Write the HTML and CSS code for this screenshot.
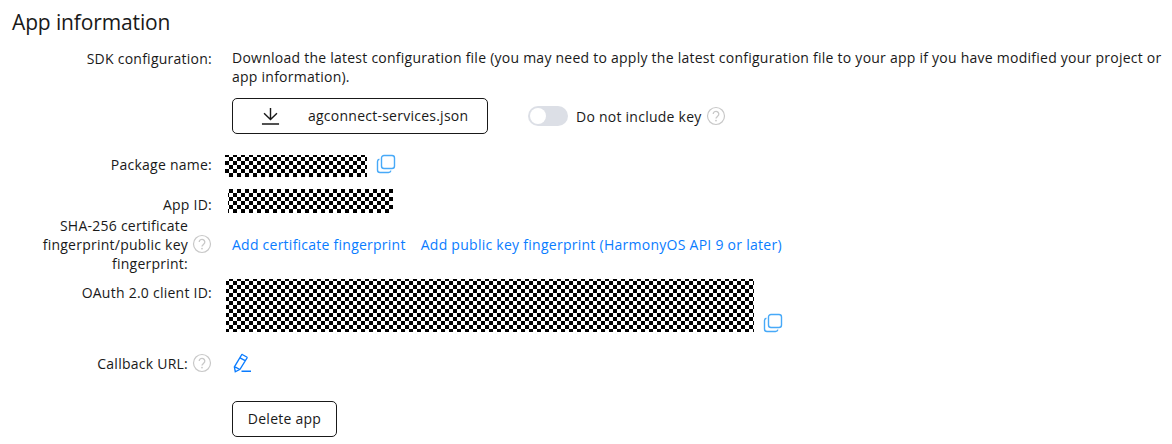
FILE: index.html
```
<!DOCTYPE html>
<html lang="en">
<head>
<meta charset="utf-8">
<title>App information</title>
<link rel="stylesheet" href="styles.css">
</head>
<body>
<svg class="sprite" width="0" height="0" aria-hidden="true">
  <symbol id="help" viewBox="0 0 20 20">
    <circle cx="10" cy="10" r="8.5" fill="none" stroke="currentColor" stroke-width="1.2"/>
    <path d="M7.2 8.1a2.8 2.7 0 1 1 4.6 2c-1.1.9-1.8 1.3-1.8 2.5" fill="none" stroke="currentColor" stroke-width="1.3"/>
    <circle cx="10" cy="14.6" r=".9" fill="currentColor"/>
  </symbol>
  <symbol id="copy" viewBox="0 0 20 20">
    <rect x="5.5" y="1.5" width="13" height="13" rx="2.5" fill="none" stroke="currentColor" stroke-width="1.4"/>
    <path d="M3.4 5.2Q1.5 5.6 1.5 7.500v8.500q0 2.500 2.500 2.500h8.500q2 0 2.400-1.900" fill="none" stroke="currentColor" stroke-width="1.4"/>
  </symbol>
</svg>
<main class="page">
  <h1 class="title">App information</h1>
  <section class="form">
    <div class="row row-sdk">
      <div class="label"><span>SDK configuration:</span></div>
      <div class="content sdk">
        <p class="hint">Download the latest configuration file (you may need to apply the latest configuration file to your app if you have modified your project or<br>app information).</p>
        <div class="actions">
          <button class="button download" type="button">
            <svg class="download-icon" viewBox="0 0 20 20" fill="none" stroke="#191919" stroke-width="1.500"><path d="M10 1.500v12.200M3.200 7.200l6.800 6.600 6.800-6.600M1 18.500h18"/></svg>
            <span>agconnect-services.json</span>
          </button>
          <span class="switch"><span class="knob"></span></span>
          <span class="key-text">Do not include key</span>
          <svg class="icon help"><use href="#help"/></svg>
        </div>
      </div>
    </div>
    <div class="row row-package">
      <div class="label"><span>Package name:</span></div>
      <div class="content"><span class="mask mask-package"></span><svg class="icon copy"><use href="#copy"/></svg></div>
    </div>
    <div class="row row-id">
      <div class="label"><span>App ID:</span></div>
      <div class="content"><span class="mask mask-id"></span></div>
    </div>
    <div class="row row-sha">
      <div class="label"><span>SHA-256 certificate<br>fingerprint/public key<br>fingerprint:</span><svg class="icon help"><use href="#help"/></svg></div>
      <div class="content links"><a class="link">Add certificate fingerprint</a><a class="link link-public">Add public key fingerprint (HarmonyOS API 9 or later)</a></div>
    </div>
    <div class="row row-client">
      <div class="label"><span>OAuth 2.0 client ID:</span></div>
      <div class="content"><span class="mask mask-client"></span><svg class="icon copy"><use href="#copy"/></svg></div>
    </div>
    <div class="row row-callback">
      <div class="label"><span>Callback URL:</span><svg class="icon help"><use href="#help"/></svg></div>
      <div class="content"><svg class="icon edit" viewBox="0 0 20 20" fill="none" stroke="currentColor" stroke-width="1.400"><path d="M10.200 1.500l4.500 2.500q.6.400.3 1L8 16.300l-4.700 2.500-.9-5L9.500 2q.3-.7.700-.5zM8 4.800l5.200 2.900M2.600 13.600l5.200 2.900M9.500 18.300h9.500"/></svg></div>
    </div>
    <div class="row row-delete">
      <div class="label"></div>
      <div class="content"><button class="button delete" type="button"><span>Delete app</span></button></div>
    </div>
  </section>
</main>
</body>
</html>
```
FILE: styles.css
```
* { box-sizing: border-box; }
body {
  margin: 0;
  background: #fff;
  color: #191919;
  font: 14px/19px "Open Sans", "Noto Sans", sans-serif;
  letter-spacing: 0.245px;
}
.sprite { display: block; }
.page { height: 444px; overflow: hidden; }
.title {
  margin: 0;
  padding: 8px 0 0 12px;
  height: 48px;
  font-size: 21px;
  line-height: 28px;
  font-weight: 400;
  letter-spacing: -0.13px;
  white-space: nowrap;
}
.row { display: grid; grid-template-columns: 212px 1fr; column-gap: 20px; }
.label {
  display: flex;
  justify-content: flex-end;
  align-items: center;
  gap: 4px;
  height: 20px;
  text-align: right;
  white-space: nowrap;
}
.content { display: flex; align-items: flex-start; white-space: nowrap; }
.row-sdk { height: 107px; }
.sdk { flex-direction: column; }
.hint { margin: 0; }
.actions { display: flex; align-items: center; height: 36px; margin-top: 12px; }
.button {
  display: flex;
  align-items: center;
  justify-content: center;
  height: 36px;
  padding: 0;
  border: 1px solid #191919;
  border-radius: 5px;
  background: #fff;
  color: inherit;
  font: inherit;
  letter-spacing: inherit;
}
.button span { padding-bottom: 2px; }
.download { width: 256px; justify-content: flex-start; padding-left: 28px; }
.download-icon { width: 19px; height: 20px; margin-right: 28px; }
.switch {
  display: flex;
  align-items: center;
  width: 40px;
  height: 20px;
  margin: 0 8px 0 40px;
  padding-left: 2px;
  border-radius: 10px;
  background: #dcdfe6;
}
.knob { width: 16px; height: 16px; border-radius: 50%; background: #fff; }
.icon { display: block; flex: none; width: 20px; height: 20px; }
.help { color: #c8c8c8; }
.actions .help { margin-left: 4px; }
.copy { color: #47a9f8; }
.edit { color: #0a7cff; }
.mask {
  flex: none;
  background: conic-gradient(#fff 25%, #000 0 50%, #fff 0 75%, #000 0) 0 0 / 8px 8px;
}
.mask-package { width: 142px; height: 22px; margin-left: -7px; background-position: 0 6px; }
.mask-id { width: 165px; height: 24px; margin-left: -4px; background-position: 5px 4px; }
.mask-client { width: 528px; height: 53px; margin-left: -6px; background-position: 7px 2px; }
.row-package { height: 34px; }
.row-package .label { margin-top: -1px; }
.row-package .copy { margin: -1px 0 0 9px; }
.row-id { height: 27px; }
.row-id .label { margin-top: 5px; }
.row-sha { height: 63px; }
.row-sha .label { height: 57px; }
.row-sha .help { margin-top: -2px; }
.links { gap: 15px; padding-top: 19px; }
.link { color: #0a7cff; }
.link-public { letter-spacing: 0.265px; }
.row-client { height: 74px; }
.row-client .label { margin-top: 3px; }
.row-client .copy { margin: 34px 0 0 9px; }
.row-callback { height: 48px; }
.delete { width: 105px; }
```
